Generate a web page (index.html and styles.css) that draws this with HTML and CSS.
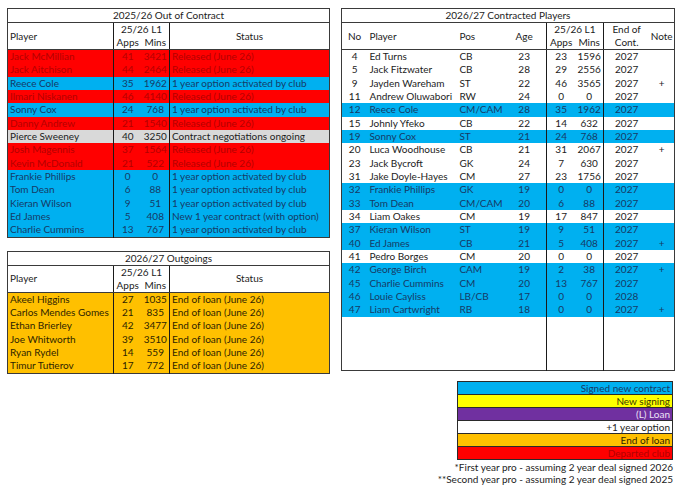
FILE: index.html
```html
<!DOCTYPE html>
<html lang="en">
<head>
<meta charset="utf-8">
<title>Squad contracts</title>
<link rel="stylesheet" href="styles.css">
</head>
<body>
<div class="page">
  <div class="col-left">
    <table class="sheet">
      <colgroup><col class="w-player"><col class="w-num"><col class="w-num"><col class="w-status"></colgroup>
      <tr><th class="title" colspan="4">2025/26 Out of Contract</th></tr>
      <tr class="hd"><th class="l" rowspan="2">Player</th><th class="c vl" colspan="2">25/26 L1</th><th class="c vl" rowspan="2">Status</th></tr>
      <tr class="hd hd2"><th class="c vl">Apps</th><th class="c">Mins</th></tr>
      <tr class="red"><td>Jack McMillian</td><td class="c vl">41</td><td class="c">3421</td><td class="vl">Released (June 26)</td></tr>
      <tr class="red"><td>Jack Aitchison</td><td class="c vl">44</td><td class="c">2464</td><td class="vl">Released (June 26)</td></tr>
      <tr class="blue"><td>Reece Cole</td><td class="c vl">35</td><td class="c">1962</td><td class="vl">1 year option activated by club</td></tr>
      <tr class="red"><td>Ilmari Niskanen</td><td class="c vl">46</td><td class="c">4140</td><td class="vl">Released (June 26)</td></tr>
      <tr class="blue"><td>Sonny Cox</td><td class="c vl">24</td><td class="c">768</td><td class="vl">1 year option activated by club</td></tr>
      <tr class="red"><td>Danny Andrew</td><td class="c vl">21</td><td class="c">1540</td><td class="vl">Released (June 26)</td></tr>
      <tr class="grey"><td>Pierce Sweeney</td><td class="c vl">40</td><td class="c">3250</td><td class="vl">Contract negotiations ongoing</td></tr>
      <tr class="red"><td>Josh Magennis</td><td class="c vl">37</td><td class="c">1564</td><td class="vl">Released (June 26)</td></tr>
      <tr class="red"><td>Kevin McDonald</td><td class="c vl">21</td><td class="c">522</td><td class="vl">Released (June 26)</td></tr>
      <tr class="blue"><td>Frankie Phillips</td><td class="c vl">0</td><td class="c">0</td><td class="vl">1 year option activated by club</td></tr>
      <tr class="blue"><td>Tom Dean</td><td class="c vl">6</td><td class="c">88</td><td class="vl">1 year option activated by club</td></tr>
      <tr class="blue"><td>Kieran Wilson</td><td class="c vl">9</td><td class="c">51</td><td class="vl">1 year option activated by club</td></tr>
      <tr class="blue"><td>Ed James</td><td class="c vl">5</td><td class="c">408</td><td class="vl">New 1 year contract (with option)</td></tr>
      <tr class="blue"><td>Charlie Cummins</td><td class="c vl">13</td><td class="c">767</td><td class="vl">1 year option activated by club</td></tr>
    </table>

    <table class="sheet">
      <colgroup><col class="w-player"><col class="w-num"><col class="w-num"><col class="w-status"></colgroup>
      <tr><th class="title" colspan="4">2026/27 Outgoings</th></tr>
      <tr class="hd"><th class="l" rowspan="2">Player</th><th class="c vl" colspan="2">25/26 L1</th><th class="c vl" rowspan="2">Status</th></tr>
      <tr class="hd hd2"><th class="c vl">Apps</th><th class="c">Mins</th></tr>
      <tr class="orange"><td>Akeel Higgins</td><td class="c vl">27</td><td class="c">1035</td><td class="vl">End of loan (June 26)</td></tr>
      <tr class="orange"><td>Carlos Mendes Gomes</td><td class="c vl">21</td><td class="c">835</td><td class="vl">End of loan (June 26)</td></tr>
      <tr class="orange"><td>Ethan Brierley</td><td class="c vl">42</td><td class="c">3477</td><td class="vl">End of loan (June 26)</td></tr>
      <tr class="orange"><td>Joe Whitworth</td><td class="c vl">39</td><td class="c">3510</td><td class="vl">End of loan (June 26)</td></tr>
      <tr class="orange"><td>Ryan Rydel</td><td class="c vl">14</td><td class="c">559</td><td class="vl">End of loan (June 26)</td></tr>
      <tr class="orange"><td>Timur Tutierov</td><td class="c vl">17</td><td class="c">772</td><td class="vl">End of loan (June 26)</td></tr>
    </table>
  </div>

  <div class="col-right">
    <table class="sheet">
      <colgroup><col class="r-no"><col class="r-player"><col class="r-pos"><col class="r-age"><col class="r-apps"><col class="r-mins"><col class="r-end"><col class="r-note"></colgroup>
      <tr><th class="title" colspan="8">2026/27 Contracted Players</th></tr>
      <tr class="hd"><th class="c" rowspan="2">No</th><th class="l" rowspan="2">Player</th><th class="l" rowspan="2">Pos</th><th class="c" rowspan="2">Age</th><th class="c vl" colspan="2">25/26 L1</th><th class="c vl">End of</th><th class="c tight" rowspan="2">Note</th></tr>
      <tr class="hd hd2"><th class="c vl">Apps</th><th class="c">Mins</th><th class="c vl">Cont.</th></tr>
      <tr class="white"><td class="c">4</td><td>Ed Turns</td><td>CB</td><td class="c">23</td><td class="c vl">23</td><td class="c">1596</td><td class="c vl">2027</td><td class="c"></td></tr>
      <tr class="white"><td class="c">5</td><td>Jack Fitzwater</td><td>CB</td><td class="c">28</td><td class="c vl">29</td><td class="c">2556</td><td class="c vl">2027</td><td class="c"></td></tr>
      <tr class="white"><td class="c">9</td><td>Jayden Wareham</td><td>ST</td><td class="c">22</td><td class="c vl">46</td><td class="c">3565</td><td class="c vl">2027</td><td class="c">+</td></tr>
      <tr class="white"><td class="c">11</td><td>Andrew Oluwabori</td><td>RW</td><td class="c">24</td><td class="c vl">0</td><td class="c">0</td><td class="c vl">2027</td><td class="c"></td></tr>
      <tr class="blue"><td class="c">12</td><td>Reece Cole</td><td>CM/CAM</td><td class="c">28</td><td class="c vl">35</td><td class="c">1962</td><td class="c vl">2027</td><td class="c"></td></tr>
      <tr class="white"><td class="c">15</td><td>Johnly Yfeko</td><td>CB</td><td class="c">22</td><td class="c vl">14</td><td class="c">632</td><td class="c vl">2027</td><td class="c"></td></tr>
      <tr class="blue"><td class="c">19</td><td>Sonny Cox</td><td>ST</td><td class="c">21</td><td class="c vl">24</td><td class="c">768</td><td class="c vl">2027</td><td class="c"></td></tr>
      <tr class="white"><td class="c">20</td><td>Luca Woodhouse</td><td>CB</td><td class="c">21</td><td class="c vl">31</td><td class="c">2067</td><td class="c vl">2027</td><td class="c">+</td></tr>
      <tr class="white"><td class="c">23</td><td>Jack Bycroft</td><td>GK</td><td class="c">24</td><td class="c vl">7</td><td class="c">630</td><td class="c vl">2027</td><td class="c"></td></tr>
      <tr class="white"><td class="c">31</td><td>Jake Doyle-Hayes</td><td>CM</td><td class="c">27</td><td class="c vl">23</td><td class="c">1756</td><td class="c vl">2027</td><td class="c"></td></tr>
      <tr class="blue"><td class="c">32</td><td>Frankie Phillips</td><td>GK</td><td class="c">19</td><td class="c vl">0</td><td class="c">0</td><td class="c vl">2027</td><td class="c"></td></tr>
      <tr class="blue"><td class="c">33</td><td>Tom Dean</td><td>CM/CAM</td><td class="c">20</td><td class="c vl">6</td><td class="c">88</td><td class="c vl">2027</td><td class="c"></td></tr>
      <tr class="white"><td class="c">34</td><td>Liam Oakes</td><td>CM</td><td class="c">19</td><td class="c vl">17</td><td class="c">847</td><td class="c vl">2027</td><td class="c"></td></tr>
      <tr class="blue"><td class="c">37</td><td>Kieran Wilson</td><td>ST</td><td class="c">19</td><td class="c vl">9</td><td class="c">51</td><td class="c vl">2027</td><td class="c"></td></tr>
      <tr class="blue"><td class="c">40</td><td>Ed James</td><td>CB</td><td class="c">21</td><td class="c vl">5</td><td class="c">408</td><td class="c vl">2027</td><td class="c">+</td></tr>
      <tr class="white"><td class="c">41</td><td>Pedro Borges</td><td>CM</td><td class="c">20</td><td class="c vl">0</td><td class="c">0</td><td class="c vl">2027</td><td class="c"></td></tr>
      <tr class="blue"><td class="c">42</td><td>George Birch</td><td>CAM</td><td class="c">19</td><td class="c vl">2</td><td class="c">38</td><td class="c vl">2027</td><td class="c">+</td></tr>
      <tr class="blue"><td class="c">45</td><td>Charlie Cummins</td><td>CM</td><td class="c">20</td><td class="c vl">13</td><td class="c">767</td><td class="c vl">2027</td><td class="c"></td></tr>
      <tr class="blue"><td class="c">46</td><td>Louie Cayliss</td><td>LB/CB</td><td class="c">17</td><td class="c vl">0</td><td class="c">0</td><td class="c vl">2028</td><td class="c"></td></tr>
      <tr class="blue"><td class="c">47</td><td>Liam Cartwright</td><td>RB</td><td class="c">18</td><td class="c vl">0</td><td class="c">0</td><td class="c vl">2027</td><td class="c">+</td></tr>
      <tr class="white"><td>&nbsp;</td><td>&nbsp;</td><td>&nbsp;</td><td>&nbsp;</td><td class="vl">&nbsp;</td><td>&nbsp;</td><td class="vl">&nbsp;</td><td>&nbsp;</td></tr>
      <tr class="white"><td>&nbsp;</td><td>&nbsp;</td><td>&nbsp;</td><td>&nbsp;</td><td class="vl">&nbsp;</td><td>&nbsp;</td><td class="vl">&nbsp;</td><td>&nbsp;</td></tr>
      <tr class="white"><td>&nbsp;</td><td>&nbsp;</td><td>&nbsp;</td><td>&nbsp;</td><td class="vl">&nbsp;</td><td>&nbsp;</td><td class="vl">&nbsp;</td><td>&nbsp;</td></tr>
      <tr class="white"><td>&nbsp;</td><td>&nbsp;</td><td>&nbsp;</td><td>&nbsp;</td><td class="vl">&nbsp;</td><td>&nbsp;</td><td class="vl">&nbsp;</td><td>&nbsp;</td></tr>
    </table>

    <div class="key">
      <table class="legend">
        <tr class="blue"><td>Signed new contract</td></tr>
        <tr class="yellow"><td>New signing</td></tr>
        <tr class="purple"><td>(L) Loan</td></tr>
        <tr class="white"><td>+1 year option</td></tr>
        <tr class="orange"><td>End of loan</td></tr>
        <tr class="red"><td>Departed club</td></tr>
      </table>
      <p class="note">*First year pro - assuming 2 year deal signed 2026</p>
      <p class="note">**Second year pro - assuming 2 year deal signed 2025</p>
    </div>
  </div>
</div>
</body>
</html>
```

FILE: styles.css
```css
body {
  margin: 0;
  background: #ffffff;
  font-family: Lato, "Liberation Sans", sans-serif;
  font-size: 10px;
  color: #1c1c1c;
}

.page {
  display: flex;
  align-items: flex-start;
  gap: 13px;
  padding: 8px 0 0 7px;
}

.col-left {
  display: flex;
  flex-direction: column;
  gap: 13px;
  width: 322px;
}

.col-right {
  display: flex;
  flex-direction: column;
  align-items: flex-end;
  gap: 10px;
  width: 333px;
}

table {
  border-collapse: collapse;
  table-layout: fixed;
}

.sheet {
  width: 100%;
  border: 1px solid #3a3a3a;
}

.w-player { width: 106px; }
.w-num { width: 28px; }
.w-status { width: 160px; }

.r-no { width: 26px; }
.r-player { width: 90px; }
.r-pos { width: 45px; }
.r-age { width: 44px; }
.r-apps { width: 29px; }
.r-mins { width: 28px; }
.r-end { width: 46px; }
.r-note { width: 25px; }

th, td {
  height: 13.33px;
  padding: 0 2px;
  line-height: 13px;
  white-space: nowrap;
  overflow: hidden;
  font-weight: normal;
  text-align: left;
}

th.title {
  height: 12px;
  text-align: center;
  border-bottom: 1px solid #3a3a3a;
  background: #ffffff;
}

.hd th {
  height: 13px;
  background: #ffffff;
}

.hd2 th {
  border-bottom: 1px solid #3a3a3a;
}

.hd th[rowspan] {
  border-bottom: 1px solid #3a3a3a;
}

th.tight { padding: 0; }

.l { text-align: left; }
th.c, td.c { text-align: center; }

.vl { border-left: 1px solid #1a1a1a; }

.red { background: #ff0000; color: #b30000; }
.blue { background: #00b0f0; color: #163a66; }
.grey { background: #d9d9d9; color: #1c1c1c; }
.orange { background: #ffc000; color: #2e2400; }
.yellow { background: #ffff00; color: #3a3a00; }
.purple { background: #7030a0; color: #ece2f5; }
.white { background: #ffffff; color: #1c1c1c; }

.key {
  display: flex;
  flex-direction: column;
  align-items: flex-end;
  margin-right: 2px;
}

.legend {
  width: 216px;
  border: 1px solid #2a2a2a;
}

.legend td {
  height: 12px;
  line-height: 12px;
  text-align: right;
  border-bottom: 1px solid #2a2a2a;
}

.note {
  margin: 0;
  line-height: 12px;
  text-align: right;
  white-space: nowrap;
}

.note:first-of-type {
  margin-top: 1px;
}
```
